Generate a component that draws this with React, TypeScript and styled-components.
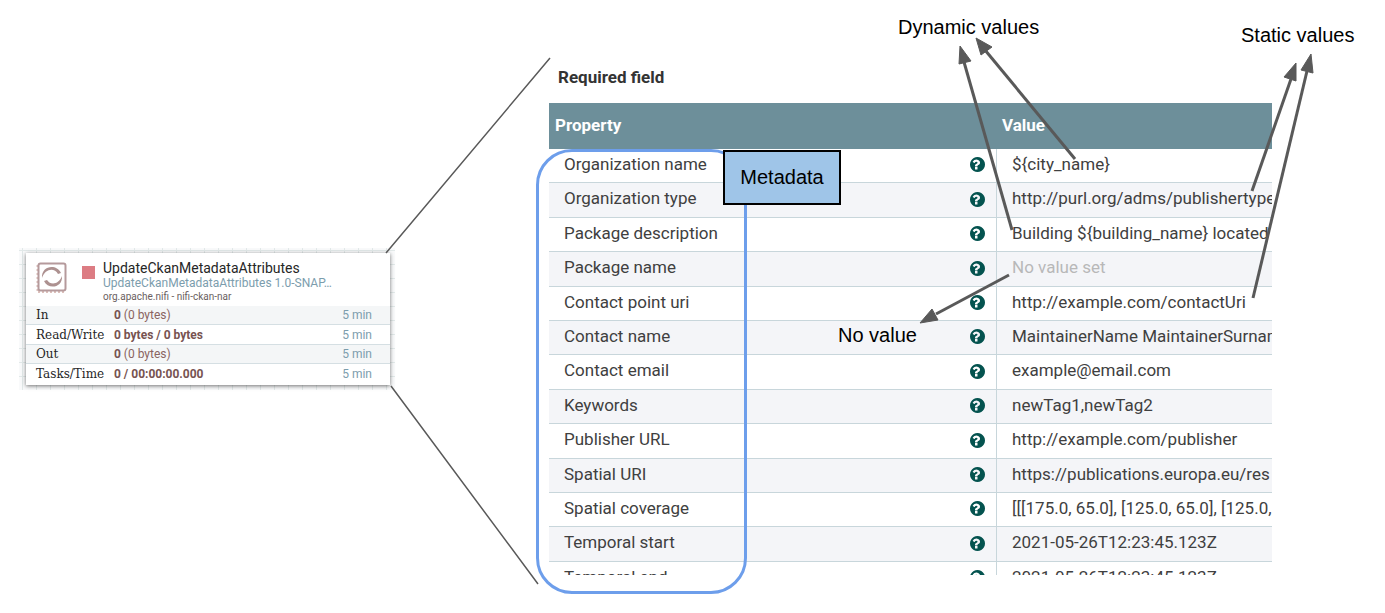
import React from "react";
import styled, { createGlobalStyle } from "styled-components";

const GlobalStyle = createGlobalStyle`
  * { box-sizing: border-box; }
  body { margin: 0; background: #fff; font-family: Roboto, "Liberation Sans", sans-serif; }
  table { border-collapse: separate; border-spacing: 0; table-layout: fixed; width: 100%; }
  th { text-align: left; }
`;

const Page = styled.main`
  display: grid;
  grid-template-columns: 376px 154px minmax(0, 1fr);
  padding: 0 113px 18px 19px;
  overflow: hidden;
`;

const CanvasPatch = styled.div`
  align-self: start;
  margin-top: 248px;
  padding: 5px 5px 5px 7px;
  background-color: #f9fafb;
  background-image:
    linear-gradient(to right, #e2e9e9 1px, transparent 1px),
    linear-gradient(to bottom, #e2e9e9 1px, transparent 1px);
  background-size: 14px 14px;
  background-position: 3px 2px;
`;

const Card = styled.section`
  background: #fff;
  padding-bottom: 2px;
  box-shadow: 0 1px 4px rgba(0, 0, 0, 0.55);
`;

const CardHeader = styled.header`
  display: grid;
  grid-template-columns: 32px 13px minmax(0, 1fr);
  height: 53px;
  padding: 7px 48px 0 10px;
  column-gap: 14px;
`;

const ProcessorIcon = styled.svg`
  width: 32px;
  height: 32px;
  margin-top: 2px;
`;

const StoppedMark = styled.span`
  width: 13px;
  height: 13px;
  margin-top: 6px;
  background: #dc7c83;
`;

const Titles = styled.div`
  white-space: nowrap;
  margin-left: -6px;
`;

const CardTitle = styled.h2`
  margin: 0;
  font-size: 14px;
  line-height: 16px;
  font-weight: 400;
  color: #262626;
`;

const CardType = styled.p`
  margin: 0;
  font-size: 12px;
  line-height: 14px;
  color: #7c9dad;
`;

const CardBundle = styled.p`
  margin: 0;
  font-size: 10px;
  line-height: 13px;
  color: #6b5f5f;
`;

const StatRow = styled.tr`
  height: 19px;
  background: #fff;
  &:nth-child(odd) { background: #f4f6f7; }
  &:nth-child(2) { height: 20px; }
  & > * { padding: 0; border-bottom: 1px solid #d5dfe3; line-height: 18px; }
  &:last-child > * { border-bottom: 0; }
`;

const StatName = styled.th`
  && { padding-left: 10px; }
  width: 88px;
  font-family: "DejaVu Serif", serif;
  font-size: 12px;
  font-weight: 400;
  color: #262626;
  white-space: nowrap;
`;

const StatValue = styled.td`
  font-size: 12px;
  color: #8a6461;
  b { color: #775351; }
`;

const StatWindow = styled.td`
  && { padding-right: 18px; }
  width: 80px;
  text-align: right;
  font-size: 12px;
  color: #7c9dad;
`;

const Connector = styled.svg`
  width: 100%;
  height: 595px;
  overflow: visible;
`;

const Panel = styled.section`
  position: relative;
  padding-top: 64px;
`;

const PanelTitle = styled.h1`
  margin: 0 0 13px 9px;
  font-size: 17px;
  line-height: 26px;
  font-weight: 700;
  color: #333;
`;

const TableView = styled.div`
  height: 472px;
  overflow: hidden;
`;

const HeadCell = styled.th<{ $width?: string }>`
  width: ${(p) => p.$width ?? "auto"};
  height: 46px;
  padding: 0 5px 2px;
  &:first-child { padding-left: 6px; }
  background: #6d8f9a;
  color: #fff;
  font-size: 17px;
  font-weight: 700;
`;

const PropertyRow = styled.tr`
  height: 34px;
  background: #fff;
  &:nth-child(even) { background: #f4f5f8; }
  &:nth-child(5n + 2), &:nth-child(5n + 4) { height: 35px; }
`;

const Cell = styled.td<{ $muted?: boolean }>`
  padding: 0 0 4px 15px;
  border-bottom: 1px solid #c8d6db;
  color: ${(p) => (p.$muted ? "#b8b8b8" : "#404040")};
  font-size: 17px;
  line-height: 24px;
  white-space: nowrap;
  overflow: hidden;
`;

const NameCell = styled(Cell)`
  border-right: 1px solid #c8d6db;
`;

const NameLine = styled.div`
  display: flex;
  align-items: center;
  justify-content: space-between;
  padding-right: 11px;
`;

const HelpButton = styled.button`
  display: flex;
  padding: 2px 0 0;
  border: 0;
  background: none;
  color: #04534f;
  svg { width: 15px; height: 15px; }
`;

const MetadataOutline = styled.div`
  position: absolute;
  left: -13px;
  top: 149px;
  width: 211px;
  height: 445px;
  border: 3px solid #6d9eeb;
  border-radius: 36px;
`;

const Note = styled.span<{ $x: number; $y: number }>`
  position: absolute;
  left: ${(p) => p.$x}px;
  top: ${(p) => p.$y}px;
  font-family: "Liberation Sans", Arial, sans-serif;
  font-size: 20px;
  line-height: 24px;
  color: #000;
  white-space: nowrap;
`;

const MetadataTag = styled(Note)`
  width: 118px;
  padding: 13px 0 14px;
  border: 2px solid #000;
  background: #9fc5e8;
  text-align: center;
`;

const Arrows = styled.svg`
  position: absolute;
  left: 0;
  top: 0;
  overflow: visible;
  pointer-events: none;
`;

const stats = [
  { name: "In", strong: "0", rest: " (0 bytes)" },
  { name: "Read/Write", strong: "0 bytes / 0 bytes", rest: "" },
  { name: "Out", strong: "0", rest: " (0 bytes)" },
  { name: "Tasks/Time", strong: "0 / 00:00:00.000", rest: "" },
];

const properties: { name: string; value: string | null }[] = [
  { name: "Organization name", value: "${city_name}" },
  { name: "Organization type", value: "http://purl.org/adms/publishertype" },
  { name: "Package description", value: "Building ${building_name} located" },
  { name: "Package name", value: null },
  { name: "Contact point uri", value: "http://example.com/contactUri" },
  { name: "Contact name", value: "MaintainerName MaintainerSurname" },
  { name: "Contact email", value: "example@email.com" },
  { name: "Keywords", value: "newTag1,newTag2" },
  { name: "Publisher URL", value: "http://example.com/publisher" },
  { name: "Spatial URI", value: "https://publications.europa.eu/res" },
  { name: "Spatial coverage", value: "[[[175.0, 65.0], [125.0, 65.0], [125.0," },
  { name: "Temporal start", value: "2021-05-26T12:23:45.123Z" },
  { name: "Temporal end", value: "2021-05-26T12:23:45.123Z" },
];

// Shaft start and end, then the three corners of the head, from the panel's left edge.
const arrows = [
  { line: [526, 159, 436, 50], head: "427,38 443,47 432,55" },
  { line: [463, 230, 415, 62], head: "411,46 422,61 410,64" },
  { line: [703, 191, 742, 79], head: "747,63 735,77 747,81" },
  { line: [704, 298, 758, 71], head: "762,54 752,70 764,73" },
  { line: [460, 275, 387, 314], head: "371,323 383,309 389,320" },
];

function HelpIcon() {
  return (
    <svg viewBox="128 128 1536 1536" fill="currentColor" aria-hidden="true">
      <path d="M896 1376v-192q0-14-9-23t-23-9h-192q-14 0-23 9t-9 23v192q0 14 9 23t23 9h192q14 0 23-9t9-23zm256-672q0-88-55.500-163t-138.500-116-170-41q-243 0-371 213-15 24 8 42l132 100q7 6 19 6 16 0 25-12 53-68 86-92 34-24 86-24 48 0 85.500 26t37.500 59q0 38-20 61t-68 45q-63 28-115.500 86.500t-52.500 125.500v36q0 14 9 23t23 9h192q14 0 23-9t9-23q0-19 21.500-49.500t54.500-49.500q32-18 49-28.500t46-35 44.500-48 28-60.500 12.500-81zm512 192q0 209-103 385.500t-279.500 279.500-385.500 103-385.500-103-279.500-279.500-103-385.500 103-385.500 279.500-279.500 385.500-103 385.500 103 279.500 279.500 103 385.500z" />
    </svg>
  );
}

function ProcessorCard() {
  return (
    <CanvasPatch>
      <Card>
        <CardHeader>
          <ProcessorIcon viewBox="0 0 32 32" fill="none" aria-hidden="true">
            <path d="M1.500 3v27.500M2 30h26" stroke="#dcc0bb" strokeWidth="2" strokeDasharray="2 2" />
            <rect x="2.500" y="1.500" width="27" height="27" rx="2" stroke="#b59a9c" strokeWidth="2" />
            <path d="M6 16C5 4 20 1 25 11L22 12C18 5 9 7 6 16zM26 14C27 26 12 28 8 19L11 18C15 24 23 22 26 14z" fill="#ad9190" />
          </ProcessorIcon>
          <StoppedMark />
          <Titles>
            <CardTitle>UpdateCkanMetadataAttributes</CardTitle>
            <CardType>UpdateCkanMetadataAttributes 1.0-SNAP…</CardType>
            <CardBundle>org.apache.nifi - nifi-ckan-nar</CardBundle>
          </Titles>
        </CardHeader>
        <table>
          <tbody>
            {stats.map((s) => (
              <StatRow key={s.name}>
                <StatName scope="row">{s.name}</StatName>
                <StatValue>
                  <b>{s.strong}</b>
                  {s.rest}
                </StatValue>
                <StatWindow>5 min</StatWindow>
              </StatRow>
            ))}
          </tbody>
        </table>
      </Card>
    </CanvasPatch>
  );
}

export default function App() {
  return (
    <>
      <GlobalStyle />
      <Page>
        <ProcessorCard />
        <Connector stroke="#595959" strokeWidth="1.500" aria-hidden="true">
          <path d="M-9 253L155 58M-4 386L143 584" />
        </Connector>
        <Panel>
          <PanelTitle>Required field</PanelTitle>
          <TableView>
            <table>
              <thead>
                <tr>
                  <HeadCell $width="448px">Property</HeadCell>
                  <HeadCell>Value</HeadCell>
                </tr>
              </thead>
              <tbody>
                {properties.map((p) => (
                  <PropertyRow key={p.name}>
                    <NameCell>
                      <NameLine>
                        {p.name}
                        <HelpButton type="button" aria-label={`About ${p.name}`}>
                          <HelpIcon />
                        </HelpButton>
                      </NameLine>
                    </NameCell>
                    <Cell $muted={p.value === null}>{p.value ?? "No value set"}</Cell>
                  </PropertyRow>
                ))}
              </tbody>
            </table>
          </TableView>
          <MetadataOutline />
          <MetadataTag $x={174} $y={150}>Metadata</MetadataTag>
          <Note $x={349} $y={15}>Dynamic values</Note>
          <Note $x={692} $y={23}>Static values</Note>
          <Note $x={289} $y={323}>No value</Note>
          <Arrows width="1" height="1" stroke="#595959" strokeWidth="3" aria-hidden="true">
            {arrows.map(({ line: [x1, y1, x2, y2], head }) => (
              <g key={head}>
                <line x1={x1} y1={y1} x2={x2} y2={y2} />
                <polygon points={head} fill="#595959" strokeWidth="1" />
              </g>
            ))}
          </Arrows>
        </Panel>
      </Page>
    </>
  );
}
